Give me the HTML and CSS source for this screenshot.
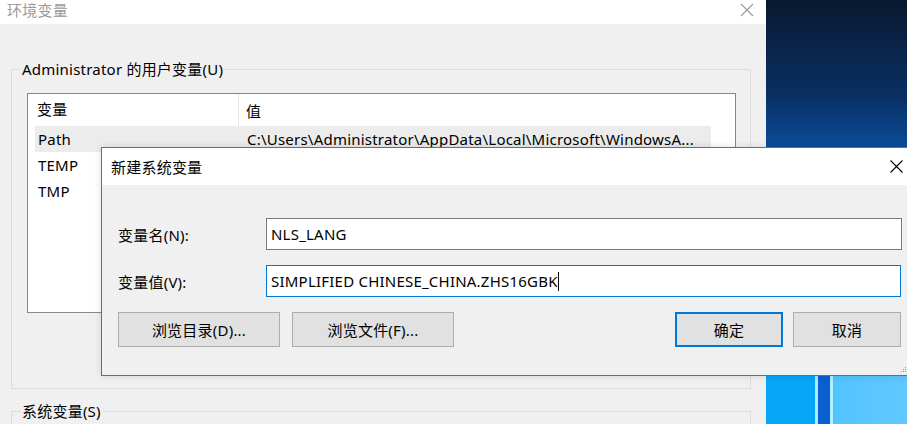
FILE: index.html
```html
<!DOCTYPE html>
<html lang="zh-CN">
<head>
<meta charset="utf-8">
<title>环境变量</title>
<link rel="stylesheet" href="styles.css">
</head>
<body>
<div class="screen">
  <div class="env-window">
    <div class="titlebar">
      <span class="title">环境变量</span>
      <svg class="close close-inactive" width="14" height="14" viewBox="0 0 14 14"><path d="M1 1 L13 13 M13 1 L1 13" stroke="#9a9a9a" stroke-width="1.1" fill="none"/></svg>
    </div>
    <div class="env-body">
      <fieldset class="group group-user">
        <legend>Administrator 的用户变量(U)</legend>
        <div class="listview">
          <div class="lv-header">
            <div class="col col-name">变量</div>
            <div class="col col-value">值</div>
          </div>
          <div class="lv-row selected">
            <div class="col col-name">Path</div>
            <div class="col col-value">C:\Users\Administrator\AppData\Local\Microsoft\WindowsA...</div>
          </div>
          <div class="lv-row">
            <div class="col col-name">TEMP</div>
            <div class="col col-value">%USERPROFILE%\AppData\Local\Temp</div>
          </div>
          <div class="lv-row">
            <div class="col col-name">TMP</div>
            <div class="col col-value">%USERPROFILE%\AppData\Local\Temp</div>
          </div>
        </div>
      </fieldset>
      <fieldset class="group group-sys">
        <legend>系统变量(S)</legend>
      </fieldset>
    </div>
  </div>
  <div class="desktop">
    <div class="desk-top"></div>
    <div class="desk-bottom"></div>
  </div>

  <div class="dialog">
    <div class="dlg-titlebar">
      <span class="dlg-title">新建系统变量</span>
      <svg class="close" width="13" height="13" viewBox="0 0 13 13"><path d="M0.5 0.5 L12.5 12.5 M12.5 0.5 L0.5 12.5" stroke="#000" stroke-width="1.1" fill="none"/></svg>
    </div>
    <div class="dlg-body">
      <div class="field-row">
        <label class="field-label">变量名(N):</label>
        <div class="textbox">NLS_LANG</div>
      </div>
      <div class="field-row">
        <label class="field-label">变量值(V):</label>
        <div class="textbox focused">SIMPLIFIED CHINESE_CHINA.ZHS16GBK<span class="caret"></span></div>
      </div>
      <div class="button-row">
        <button class="btn btn-wide">浏览目录(D)...</button>
        <button class="btn btn-wide">浏览文件(F)...</button>
        <span class="spacer"></span>
        <button class="btn btn-default">确定</button>
        <button class="btn">取消</button>
      </div>
      <svg class="grip" width="6" height="6" viewBox="0 0 6 6"><rect x="4" y="0" width="1" height="1" fill="#9a9a9a"/><rect x="2" y="2" width="1" height="1" fill="#9a9a9a"/><rect x="4" y="2" width="1" height="1" fill="#9a9a9a"/><rect x="0" y="4" width="1" height="1" fill="#9a9a9a"/><rect x="2" y="4" width="1" height="1" fill="#9a9a9a"/><rect x="4" y="4" width="1" height="1" fill="#9a9a9a"/></svg>
    </div>
  </div>
</div>
</body>
</html>
```

FILE: styles.css
```css
* { box-sizing: border-box; }

html, body {
  margin: 0;
  padding: 0;
}

body {
  font-family: "Noto Sans", "Noto Sans CJK SC", sans-serif;
  font-size: 15px;
  letter-spacing: 0.22px;
  color: #000;
}

.screen {
  position: relative;
  width: 907px;
  height: 424px;
  overflow: hidden;
  display: flex;
}

/* ---------- outer window ---------- */
.env-window {
  width: 766px;
  height: 424px;
  display: flex;
  flex-direction: column;
  background: #f0f0f0;
}

.titlebar {
  height: 27px;
  background: #fff;
  display: flex;
  align-items: center;
  justify-content: space-between;
  padding: 0 12px 4px 7px;
}

.title {
  color: #9a9a9a;
  line-height: 20px;
}

.env-body {
  flex: 1;
  padding: 35px 0 0 11px;
}

.group {
  margin: 0;
  padding: 0;
  width: 740px;
  border: 1px solid #dcdcdc;
  min-width: 0;
}

.group legend {
  margin-left: 9px;
  padding: 0 2px 0 1px;
  line-height: 20px;
}

.group-user {
  height: 330px;
}

.group-sys {
  margin-top: 12px;
  height: 60px;
}

/* ---------- list view ---------- */
.listview {
  margin: 14px 0 0 15px;
  width: 709px;
  height: 220px;
  border: 1px solid #828790;
  background: #fff;
  padding: 0 24px 0 0;
}

.lv-header {
  display: flex;
  height: 32px;
  align-items: center;
  padding-left: 9px;
}

.lv-header .col-name {
  width: 202px;
  height: 32px;
  line-height: 31px;
  border-right: 1px solid #e5e5e5;
}

.lv-header .col-value {
  padding-left: 7px;
}

.lv-row {
  display: flex;
  height: 26px;
  align-items: center;
  margin-left: 7px;
  padding-left: 3px;
  white-space: nowrap;
}

.lv-row.selected {
  background: #ececec;
}

.lv-row .col-name {
  width: 209px;
}

.lv-row .col-value {
  flex: 1;
  overflow: hidden;
}

/* ---------- desktop ---------- */
.desktop {
  flex: 1;
  display: flex;
  flex-direction: column;
}

.desk-top {
  flex: 1;
  background:
    radial-gradient(ellipse 140px 120px at 20% 100%, rgba(20,110,210,0.55), rgba(20,110,210,0) 100%),
    linear-gradient(180deg, #08182f 0%, #0a2f62 25%, #0b4d9c 40%, #0b5fb8 60%, #0c66c4 100%);
}

.desk-bottom {
  height: 49px;
  background: linear-gradient(90deg,
    #06a6f8 0, #06a6f8 49px,
    #a7ecff 49px, #a7ecff 52px,
    #0a60cf 52px, #0a60cf 64px,
    #b3efff 64px, #b3efff 67px,
    #52c4ff 67px, #61c8ff 100%);
}

/* ---------- dialog ---------- */
.dialog {
  position: absolute;
  left: 101px;
  top: 147px;
  width: 808px;
  height: 229px;
  border: 1px solid #1883d7;
  background: #f0f0f0;
  display: flex;
  flex-direction: column;
  box-shadow: 0 0 8px rgba(0,0,0,0.12);
}

.dlg-titlebar {
  height: 37px;
  background: #fff;
  display: flex;
  align-items: center;
  justify-content: space-between;
  padding: 0 5px 0 9px;
}

.dlg-title {
  line-height: 20px;
}

.dlg-body {
  flex: 1;
  position: relative;
  padding: 33px 0 0 15px;
}

.field-row {
  display: flex;
  align-items: center;
  height: 32px;
  margin-bottom: 15px;
}

.field-label {
  width: 149px;
  padding-left: 1px;
}

.textbox {
  width: 636px;
  height: 32px;
  border: 1px solid #7a7a7a;
  background: #fff;
  padding: 0 4px;
  line-height: 30px;
  white-space: nowrap;
}

.textbox.focused {
  width: 635px;
  border-color: #0078d7;
}

.caret {
  display: inline-block;
  width: 1px;
  height: 19px;
  background: #000;
  vertical-align: -4px;
}

.button-row {
  display: flex;
  margin-top: 7px;
  width: 783px;
  margin-left: 1px;
}

.spacer { flex: 1; }

.btn {
  font: inherit;
  letter-spacing: inherit;
  color: #000;
  height: 35px;
  width: 108px;
  background: #e1e1e1;
  border: 1px solid #adadad;
  padding: 0;
  margin: 0 10px 0 0;
}

.btn:last-child { margin-right: 0; }

.btn-wide {
  width: 162px;
  margin-right: 12px;
}

.btn-default {
  border: 2px solid #0078d7;
}

.grip {
  position: absolute;
  right: 1px;
  bottom: 2px;
}
```
